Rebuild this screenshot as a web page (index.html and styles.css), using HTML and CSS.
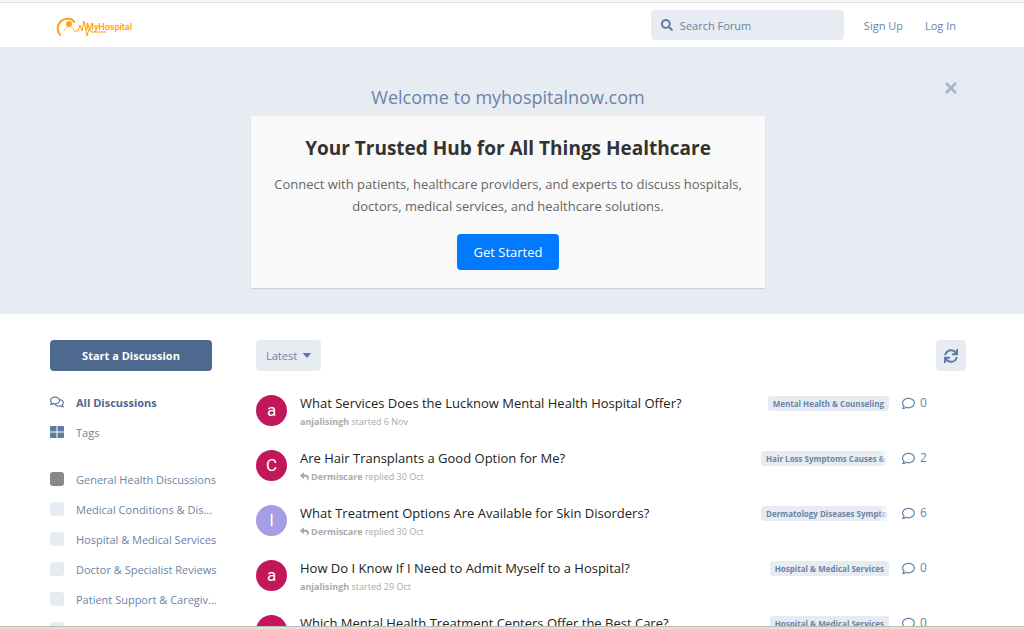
FILE: index.html
```html
<!DOCTYPE html>
<html lang="en">

<head>
    <meta charset="utf-8">
    <meta name="viewport" content="width=device-width, initial-scale=1.0">
    <title>MyHospital Forum</title>
    <link rel="stylesheet" href="styles.css">
</head>

<body>
    <!-- icons -->
    <svg class="sprite" aria-hidden="true">
        <symbol id="search" viewBox="0 0 512 512"><path d="M505 442.7L405.3 343c-4.5-4.5-10.6-7-17-7H372c27.6-35.3 44-79.7 44-128C416 93.1 322.9 0 208 0S0 93.1 0 208s93.1 208 208 208c48.3 0 92.7-16.4 128-44v16.3c0 6.4 2.5 12.5 7 17l99.7 99.7c9.4 9.4 24.6 9.4 33.9 0l28.3-28.3c9.4-9.4 9.4-24.6.1-34zM208 336c-70.7 0-128-57.2-128-128 0-70.7 57.2-128 128-128 70.7 0 128 57.2 128 128 0 70.7-57.2 128-128 128z"/></symbol>
        <symbol id="comment" viewBox="0 0 512 512"><path d="M256 32C114.6 32 0 125.1 0 240c0 47.6 19.9 91.2 52.9 126.3C38 405.7 7 439.1 6.5 439.5c-6.6 7-8.4 17.2-4.6 26S14.4 480 24 480c61.5 0 110-25.7 139.1-46.3C192 442.8 223.2 448 256 448c141.4 0 256-93.1 256-208S397.4 32 256 32zm0 368c-26.7 0-53.1-4.1-78.4-12.1l-22.7-7.2-19.5 13.8c-14.3 10.1-33.9 21.4-57.5 29 7.3-12.1 14.4-25.7 19.9-40.2l10.6-28.1-20.6-21.8C69.7 314.1 48 282.2 48 240c0-88.2 93.3-160 208-160s208 71.8 208 160-93.3 160-208 160z"/></symbol>
        <symbol id="comments" viewBox="0 0 576 512"><path d="M532 386.2c27.5-27.1 44-61.1 44-98.2 0-80-76.5-146.1-176.2-157.9C368.3 72.5 294.3 32 208 32 93.1 32 0 103.6 0 192c0 37 16.5 71 44 98.2-15.3 30.7-37.3 54.5-37.7 54.9-6.3 6.7-8.1 16.5-4.4 25 3.6 8.5 12 14 21.2 14 53.5 0 96.7-20.2 125.2-38.8 9.2 2.1 18.7 3.7 28.4 4.9C208.1 407.6 281.8 448 368 448c20.8 0 40.8-2.4 59.8-6.8C456.3 459.7 499.4 480 553 480c9.2 0 17.5-5.5 21.2-14 3.6-8.5 1.9-18.3-4.4-25-.4-.3-22.5-24.1-37.8-54.8zm-392.8-92.3L122.1 305c-14.1 9.1-28.5 16.3-43.1 21.4 2.7-4.7 5.4-9.7 8-14.8l15.5-31.1L77.7 256C64.2 242.6 48 220.7 48 192c0-60.7 73.3-112 160-112s160 51.3 160 112-73.3 112-160 112c-16.5 0-33-1.9-49-5.6l-19.8-4.5zM498.3 352l-24.7 24.4 15.5 31.1c2.6 5.1 5.3 10.1 8 14.8-14.6-5.1-29-12.3-43.1-21.4l-17.1-11.1-19.9 4.6c-16 3.7-32.5 5.6-49 5.6-54 0-102.2-20.1-131.3-49.7C338 339.5 416 272.9 416 192c0-3.4-.4-6.7-.7-10C479.7 196.5 528 238.8 528 288c0 28.7-16.2 50.6-29.7 64z"/></symbol>
        <symbol id="reply" viewBox="0 0 512 512"><path d="M8.309 189.836L184.313 37.851C199.719 24.546 224 35.347 224 56.015v80.053c160.629 1.839 288 34.032 288 186.258 0 61.441-39.581 122.309-83.333 154.132-13.653 9.931-33.111-2.533-28.077-18.631 45.344-145.012-21.507-183.51-176.59-185.742V360c0 20.7-24.3 31.453-39.687 18.164l-176.004-152c-11.071-9.562-11.086-26.753 0-36.328z"/></symbol>
        <symbol id="grid" viewBox="0 0 14 12"><path d="M1 0h5.500v5.500H0V1a1 1 0 0 1 1-1zM7.500 0H13a1 1 0 0 1 1 1v4.500H7.500zM0 6.500h6.500V12H1a1 1 0 0 1-1-1zM7.500 6.500H14V11a1 1 0 0 1-1 1H7.500z"/></symbol>
        <symbol id="caret" viewBox="0 0 8 5"><path d="M.6 0h6.800q.9 0 .3.700L4.500 4.600q-.5.500-1 0L.3.700Q-.3 0 .6 0z"/></symbol>
        <symbol id="times" viewBox="0 0 10 10"><path d="M2 2l6 6M8 2l-6 6" fill="none" stroke="currentColor" stroke-width="2" stroke-linecap="round"/></symbol>
        <symbol id="refresh" viewBox="0 0 512 512"><path d="M440.650 12.570l4 82.770A247.160 247.160 0 0 0 255.830 8C134.730 8 33.910 94.920 12.290 209.820A12 12 0 0 0 24.090 224h49.050a12 12 0 0 0 11.670-9.260 175.910 175.910 0 0 1 317-56.940l-101.460-4.860a12 12 0 0 0-12.570 12v47.410a12 12 0 0 0 12 12H500a12 12 0 0 0 12-12V12a12 12 0 0 0-12-12h-47.370a12 12 0 0 0-11.980 12.570zM255.830 432a175.610 175.610 0 0 1-146-77.800l101.800 4.870a12 12 0 0 0 12.570-12v-47.400a12 12 0 0 0-12-12H12a12 12 0 0 0-12 12V500a12 12 0 0 0 12 12h47.350a12 12 0 0 0 12-12.600l-4.150-82.570A247.170 247.170 0 0 0 255.830 504c121.110 0 221.930-86.920 243.550-201.820a12 12 0 0 0-11.800-14.180h-49.050a12 12 0 0 0-11.670 9.260A175.860 175.860 0 0 1 255.830 432z"/></symbol>
    </svg>

    <div class="page">
        <header class="header">
            <a class="logo" href="#" aria-label="MyHospital">
                <svg width="76" height="24" viewBox="0 0 76 24">
                    <g fill="none" stroke="#ffa012" stroke-linecap="round">
                        <path d="M4 22C-1 15 3 7 10 6q6-1 8 3" stroke-width="2"/>
                        <path d="M8 18q1-4 4-4M15 14q3 1 3 4" stroke-width="1" stroke-opacity=".6"/>
                        <path d="M19 18h3l2-6 2 6 2-10 3 15 2-7 2 3h15" stroke-width="1"/>
                    </g>
                    <circle cx="13" cy="11" r="3" fill="#ffa012"/>
                    <text class="logo_text" x="30" y="17">MyHospital</text>
                </svg>
            </a>
            <label class="search">
                <svg class="icon"><use href="#search"/></svg>
                <input type="search" placeholder="Search Forum" aria-label="Search Forum">
            </label>
            <nav class="session">
                <a href="#">Sign Up</a>
                <a href="#">Log In</a>
            </nav>
        </header>

        <section class="hero">
            <button class="close" aria-label="Close"><svg class="icon"><use href="#times"/></svg></button>
            <h2>Welcome to myhospitalnow.com</h2>
            <div class="hero_box">
                <h1>Your Trusted Hub for All Things Healthcare</h1>
                <p>Connect with patients, healthcare providers, and experts to discuss hospitals, doctors, medical services, and healthcare solutions.</p>
                <a class="get_started" href="#">Get Started</a>
            </div>
        </section>

        <div class="container">
            <aside class="sidebar">
                <button class="start">Start a Discussion</button>
                <nav class="side_nav">
                    <a class="active" href="#"><svg class="icon"><use href="#comments"/></svg><span>All Discussions</span></a>
                    <a href="#"><svg class="icon"><use href="#grid"/></svg><span>Tags</span></a>
                </nav>
                <nav class="side_nav">
                    <a href="#"><i class="box dark"></i><span>General Health Discussions</span></a>
                    <a href="#"><i class="box"></i><span>Medical Conditions &amp; Dis...</span></a>
                    <a href="#"><i class="box"></i><span>Hospital &amp; Medical Services</span></a>
                    <a href="#"><i class="box"></i><span>Doctor &amp; Specialist Reviews</span></a>
                    <a href="#"><i class="box"></i><span>Patient Support &amp; Caregiv...</span></a>
                    <a href="#"><i class="box"></i><span></span></a>
                </nav>
            </aside>

            <main class="content">
                <div class="toolbar">
                    <button class="sort">Latest <svg class="icon"><use href="#caret"/></svg></button>
                    <button class="refresh" aria-label="Refresh"><svg class="icon"><use href="#refresh"/></svg></button>
                </div>

                <ul class="discussions">
                    <li>
                        <span class="avatar">a</span>
                        <a class="main" href="#">
                            <h3>What Services Does the Lucknow Mental Health Hospital Offer?</h3>
                            <p><b>anjalisingh</b> started 6 Nov</p>
                        </a>
                        <div class="tags"><span class="tag">Mental Health &amp; Counseling</span></div>
                        <span class="count"><svg class="icon"><use href="#comment"/></svg>0</span>
                    </li>
                    <li>
                        <span class="avatar">C</span>
                        <a class="main" href="#">
                            <h3>Are Hair Transplants a Good Option for Me?</h3>
                            <p><svg class="icon"><use href="#reply"/></svg><b>Dermiscare</b> replied 30 Oct</p>
                        </a>
                        <div class="tags fade"><span class="tag">Hair Loss Symptoms Causes &amp; T</span></div>
                        <span class="count"><svg class="icon"><use href="#comment"/></svg>2</span>
                    </li>
                    <li>
                        <span class="avatar purple">I</span>
                        <a class="main" href="#">
                            <h3>What Treatment Options Are Available for Skin Disorders?</h3>
                            <p><svg class="icon"><use href="#reply"/></svg><b>Dermiscare</b> replied 30 Oct</p>
                        </a>
                        <div class="tags fade"><span class="tag">Dermatology Diseases Sympto</span></div>
                        <span class="count"><svg class="icon"><use href="#comment"/></svg>6</span>
                    </li>
                    <li>
                        <span class="avatar">a</span>
                        <a class="main" href="#">
                            <h3>How Do I Know If I Need to Admit Myself to a Hospital?</h3>
                            <p><b>anjalisingh</b> started 29 Oct</p>
                        </a>
                        <div class="tags"><span class="tag">Hospital &amp; Medical Services</span></div>
                        <span class="count"><svg class="icon"><use href="#comment"/></svg>0</span>
                    </li>
                    <li>
                        <span class="avatar">a</span>
                        <a class="main" href="#">
                            <h3>Which Mental Health Treatment Centers Offer the Best Care?</h3>
                        </a>
                        <div class="tags"><span class="tag">Hospital &amp; Medical Services</span></div>
                        <span class="count"><svg class="icon"><use href="#comment"/></svg>0</span>
                    </li>
                </ul>
            </main>
        </div>
    </div>
</body>

</html>
```
FILE: styles.css
```css
* {
    box-sizing: border-box;
    margin: 0;
    padding: 0;
}

body {
    display: flex;
    flex-direction: column;
    height: 100vh;
    overflow: hidden;
    font-family: "Open Sans", "Noto Sans", sans-serif;
    font-size: 11px;
    color: #6b84a6;
    background-color: #fff;
    border-top: 2px solid #f5f5f5;
    border-bottom: 2px solid #ebdfd3;
}

a {
    color: inherit;
    text-decoration: none;
}

button,
input {
    font: inherit;
    color: inherit;
    border: 0;
}

button {
    cursor: pointer;
}

.sprite {
    display: none;
}

.icon {
    width: 14px;
    height: 14px;
    flex: none;
    fill: currentColor;
}

.page {
    flex: 1;
    min-height: 0;
    overflow: hidden;
    border-top: 1px solid #e2e2e2;
    border-bottom: 1px solid #bdbab6;
}

/* header */
.header {
    display: flex;
    align-items: center;
    height: 44px;
    padding: 0 68px 0 56px;
}

.logo {
    display: flex;
    margin-right: auto;
}

.logo_text {
    font-family: Roboto, sans-serif;
    font-size: 9px;
    font-weight: 600;
    fill: #ffa012;
}

.search {
    display: flex;
    align-items: center;
    width: 193px;
    height: 30px;
    padding: 0 10px;
    background-color: #e7ecf3;
    border-radius: 4px;
}

.search .icon {
    width: 12px;
    height: 12px;
    color: #5f7ba3;
}

.search input {
    flex: 1;
    min-width: 0;
    margin-left: 7px;
    background-color: transparent;
    outline: none;
}

.search input::placeholder {
    color: #6b84a6;
    opacity: 1;
}

.session {
    display: flex;
    gap: 22px;
    margin-left: 20px;
}

/* hero */
.hero {
    position: relative;
    padding: 36px 58px 26px 50px;
    text-align: center;
    background-color: #e7ecf3;
}

.hero h2 {
    font-size: 18px;
    font-weight: 400;
    line-height: 28px;
    margin-bottom: 5px;
}

.close {
    position: absolute;
    top: 34px;
    right: 66px;
    display: flex;
    background-color: transparent;
    color: #a5b4ca;
}

.hero_box {
    max-width: 514px;
    margin: 0 auto;
    padding: 18px 20px;
    background-color: #f9f9f9;
    box-shadow: 0 1px 1px rgba(0, 0, 0, 0.1);
}

.hero_box h1 {
    font-size: 19px;
    line-height: 28px;
    color: #333;
    margin-bottom: 11px;
}

.hero_box p {
    font-size: 13px;
    line-height: 22px;
    color: #666;
    margin-bottom: 17px;
}

.get_started {
    display: inline-block;
    padding: 0 17px;
    font-size: 13px;
    line-height: 36px;
    color: #fff;
    background-color: #007bff;
    border-radius: 4px;
    vertical-align: top;
}

/* layout */
.container {
    display: flex;
    gap: 44px;
    padding: 26px 58px 0 50px;
}

.sidebar {
    flex: none;
    width: 162px;
}

.start {
    width: 100%;
    height: 31px;
    margin-bottom: 16px;
    font-weight: 700;
    color: #fff;
    background-color: #4d698e;
    border-radius: 4px;
}

.side_nav {
    margin-bottom: 17px;
}

.side_nav a {
    display: flex;
    align-items: center;
    gap: 12px;
    height: 30px;
}

.side_nav span {
    white-space: nowrap;
}

.side_nav .icon {
    color: #5f7ba3;
}

.side_nav .active {
    font-weight: 700;
    color: #4d698e;
}

.box {
    flex: none;
    width: 14px;
    height: 14px;
    border-radius: 3px;
    background-color: #e7ecf3;
}

.dark {
    background-color: #888;
}

/* discussions */
.content {
    flex: 1;
    min-width: 0;
}

.toolbar {
    display: flex;
    justify-content: space-between;
    margin-bottom: 16px;
}

.sort,
.refresh {
    display: flex;
    align-items: center;
    gap: 6px;
    height: 31px;
    padding: 0 10px;
    background-color: #e7ecf3;
    border-radius: 4px;
}

.sort .icon {
    width: 8px;
    height: 5px;
    color: #5f7ba3;
}

.refresh {
    padding: 0 8px;
    color: #5f7ba3;
}

.discussions {
    list-style: none;
}

.discussions li {
    display: flex;
    align-items: flex-start;
    height: 55px;
    padding-top: 6px;
}

.avatar {
    flex: none;
    width: 31px;
    height: 31px;
    margin: 2px 13px 0 0;
    font-family: Roboto, sans-serif;
    font-size: 17px;
    line-height: 31px;
    text-align: center;
    color: #fff;
    background-color: #c2185b;
    border-radius: 50%;
}

.purple {
    background-color: #a59de5;
}

.main {
    flex: 1;
    min-width: 0;
}

.main h3 {
    font-size: 13px;
    font-weight: 400;
    line-height: 20px;
    color: #222;
}

.main p {
    font-size: 9px;
    line-height: 18px;
    color: #aaa;
}

.main .icon {
    width: 9px;
    height: 9px;
    margin-right: 2px;
    vertical-align: -1px;
}

.tags {
    position: relative;
    display: flex;
    max-width: 128px;
    margin-top: 3px;
    overflow: hidden;
}

.tag {
    padding: 0 5px;
    font-size: 8px;
    font-weight: 700;
    line-height: 15px;
    white-space: nowrap;
    background-color: #e7ecf3;
    border-radius: 3px;
}

.fade::after {
    content: "";
    position: absolute;
    top: 0;
    right: 0;
    width: 10px;
    height: 100%;
    background: linear-gradient(to right, transparent, #fff);
}

.count {
    display: flex;
    align-items: center;
    gap: 5px;
    width: 64px;
    margin-left: 13px;
    font-size: 12px;
    line-height: 20px;
}

.count .icon {
    width: 13px;
    height: 13px;
}
```
